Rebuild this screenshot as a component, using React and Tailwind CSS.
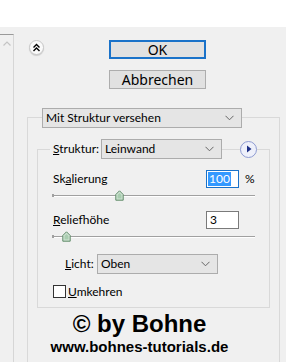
import React from "react";

const Chevron = () => (
  <svg width="9" height="6" viewBox="0 0 9 6" className="shrink-0">
    <path d="M0.5 0.8 L4.5 4.8 L8.5 0.8" fill="none" stroke="#666" strokeWidth="1" />
  </svg>
);

const Combo = ({ label, className = "" }) => (
  <div
    className={
      "flex items-center justify-between h-[20px] border border-[#acacac] bg-[#e5e5e5] pl-[3px] pr-[7px] " +
      className
    }
  >
    <span className="leading-none">{label}</span>
    <Chevron />
  </div>
);

const Thumb = () => (
  <svg width="9" height="11" viewBox="0 0 9 11">
    <path d="M4.5 0.8 L8.2 4.5 L8.2 10.2 L0.8 10.2 L0.8 4.5 Z" fill="#cfe3d3" stroke="#5f8a68" strokeWidth="1" />
    <path d="M2.5 5 L4.5 3 L6.5 5 L6.5 8.5 L2.5 8.5 Z" fill="#a9cdb0" />
  </svg>
);

const Slider = ({ pos }) => (
  <div className="relative h-[11px] w-[203px]">
    <div className="absolute left-0 right-0 top-[5px] h-[2px] border-t border-[#a0a0a0] bg-white" />
    <div className="absolute left-0 top-[4px] h-[3px] w-[2px] bg-[#a0a0a0]" />
    <div className="absolute top-0" style={{ left: pos - 4 }}>
      <Thumb />
    </div>
  </div>
);

export default function App() {
  return (
    <div
      className="relative w-[286px] h-[362px] overflow-hidden bg-[#f0f0f0] text-[12px] text-black flex flex-col"
      style={{ fontFamily: 'Lato, Roboto, sans-serif' }}
    >
      <div className="h-[27px] bg-white shrink-0" />
      <div className="flex flex-1">
        {/* left panel edge */}
        <div className="w-[14px] mt-[7px] border-t border-t-[#9a9a9a] border-r border-r-[#d6d6d6] shrink-0 flex justify-center pt-[6px]">
          <svg width="8" height="5" viewBox="0 0 8 5">
            <path d="M0.5 4.5 L4 1 L7.5 4.5" fill="none" stroke="#c4c4c4" strokeWidth="1.2" />
          </svg>
        </div>

        <div className="flex-1 flex flex-col">
          {/* top buttons */}
          <div className="flex mt-[13px]">
            <div className="ml-[15px] w-[15px] h-[15px] rounded-full bg-[#fafafa] border border-[#c8c8c8] shadow-[0_1px_1px_rgba(0,0,0,0.15)] flex items-center justify-center">
              <svg width="9" height="9" viewBox="0 0 9 9">
                <path d="M1.5 4.5 L4.5 1.5 L7.5 4.5 M1.5 8 L4.5 5 L7.5 8" fill="none" stroke="#000" strokeWidth="1.4" />
              </svg>
            </div>
            <div
              className="ml-[65px] flex flex-col gap-[11px] text-[14px]"
              style={{ fontFamily: '"Noto Sans", "Open Sans", sans-serif' }}
            >
              <div className="w-[97px] h-[19px] border-2 border-[#1a72c9] bg-[#e1e1e1] flex items-center justify-center leading-none">
                OK
              </div>
              <div className="w-[97px] h-[19px] border border-[#adadad] bg-[#e1e1e1] flex items-center justify-center leading-none">
                Abbrechen
              </div>
            </div>
          </div>

          {/* outer group */}
          <div className="ml-[13px] mt-[28px] w-[253px] flex-1 border-t border-l border-r border-[#d9d9d9] flex flex-col">
            <Combo label="Mit Struktur versehen" className="ml-[14px] mt-[-10px] w-[200px]" />

            {/* inner group */}
            <div className="ml-[9px] mt-[21px] w-[233px] h-[159px] border border-[#d9d9d9] pl-[12px] flex flex-col">
              <div className="flex items-center mt-[-11px] h-[20px]">
                <div className="w-[51px] h-[20px] bg-[#f0f0f0] pl-[3px] flex items-center">
                  <span><span className="underline">S</span>truktur:</span>
                </div>
                <Combo label="Leinwand" className="w-[121px]" />
                <div className="ml-[18px] w-[17px] h-[17px] rounded-full border border-[#8e9bd2] bg-[#eef0fa] flex items-center justify-center">
                  <svg width="6" height="8" viewBox="0 0 6 8">
                    <path d="M1 0.5 L5.5 4 L1 7.5 Z" fill="#1d2f86" />
                  </svg>
                </div>
              </div>

              <div className="flex items-center mt-[11px] h-[18px] pl-[3px]">
                <span className="w-[153px]">Sk<span className="underline">a</span>lierung</span>
                <div className="w-[33px] h-[18px] border border-[#1a72c9] bg-white flex items-center pl-[1px]">
                  <span className="bg-[#3399ff] text-white leading-[14px] px-[1px]">100</span>
                </div>
                <span className="ml-[6px]">%</span>
              </div>
              <div className="mt-[2px] pl-[2px]">
                <Slider pos={67} />
              </div>

              <div className="flex items-center mt-[10px] h-[18px] pl-[3px]">
                <span className="w-[153px]"><span className="underline">R</span>eliefhöhe</span>
                <div className="w-[33px] h-[18px] border border-[#7a7a7a] bg-white flex items-center pl-[3px]">
                  <span className="leading-none">3</span>
                </div>
              </div>
              <div className="mt-[2px] pl-[2px]">
                <Slider pos={14} />
              </div>

              <div className="flex items-center mt-[12px] h-[20px] pl-[15px]">
                <span className="w-[32px]"><span className="underline">L</span>icht:</span>
                <Combo label="Oben" className="w-[121px]" />
              </div>

              <div className="flex items-center mt-[11px] h-[13px] pl-[3px]">
                <div className="w-[13px] h-[13px] border border-[#333] bg-white" />
                <span className="ml-[2px]"><span className="underline">U</span>mkehren</span>
              </div>
            </div>
          </div>
        </div>
      </div>

      {/* watermark */}
      <div
        className="absolute left-0 top-[310px] w-[279px] flex flex-col items-center text-black font-bold"
        style={{ fontFamily: '"Liberation Sans", Arial, sans-serif' }}
      >
        <div className="text-[24px] leading-[27px]">© by Bohne</div>
        <div className="text-[15px] leading-[18px] mt-[1px]">www.bohnes-tutorials.de</div>
      </div>
    </div>
  );
}
